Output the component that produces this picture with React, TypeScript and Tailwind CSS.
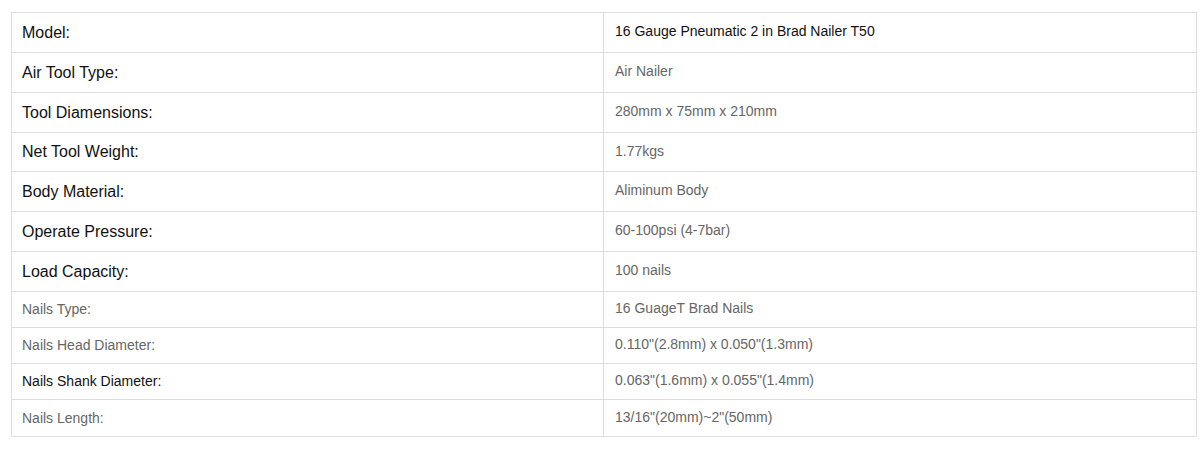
import React from "react";

type Row = { label: string; value: string; big: boolean; labelDark?: boolean; valueDark?: boolean; h: string; last?: boolean };

const rows: Row[] = [
  { label: "Model:", value: "16 Gauge Pneumatic 2 in Brad Nailer T50", big: true, valueDark: true, h: "h-[40px]" },
  { label: "Air Tool Type:", value: "Air Nailer", big: true, h: "h-[40px]" },
  { label: "Tool Diamensions:", value: "280mm x 75mm x 210mm", big: true, h: "h-[40px]" },
  { label: "Net Tool Weight:", value: "1.77kgs", big: true, h: "h-[39px]" },
  { label: "Body Material:", value: "Aliminum Body", big: true, h: "h-[40px]" },
  { label: "Operate Pressure:", value: "60-100psi (4-7bar)", big: true, h: "h-[40px]" },
  { label: "Load Capacity:", value: "100 nails", big: true, h: "h-[40px]" },
  { label: "Nails Type:", value: "16 GuageT Brad Nails", big: false, h: "h-[36px]" },
  { label: "Nails Head Diameter:", value: "0.110\"(2.8mm) x 0.050\"(1.3mm)", big: false, h: "h-[36px]" },
  { label: "Nails Shank Diameter:", value: "0.063\"(1.6mm) x 0.055\"(1.4mm)", big: false, labelDark: true, h: "h-[36px]" },
  { label: "Nails Length:", value: "13/16\"(20mm)~2\"(50mm)", big: false, h: "h-[36px]", last: true },
];

export default function App() {
  return (
    <div className="w-[1204px] h-[449px] bg-white pt-[12px] pl-[11px]" style={{ fontFamily: '"Liberation Sans", Arial, sans-serif' }}>
      <div className="w-[1186px] border border-[#dddddd] flex flex-col">
        {rows.map((r, i) => (
          <div key={i} className={`flex ${r.h} ${r.last ? "" : "border-b border-[#dddddd]"}`}>
            <div
              className={`w-[592px] border-r border-[#dddddd] pl-[10px] flex items-center ${
                r.big ? "text-[16px] text-[#111111]" : r.labelDark ? "text-[14px] text-[#111111]" : "text-[14px] text-[#666666]"
              }`}
            >
              {r.label}
            </div>
            <div className={`flex-1 pl-[11px] pb-[2px] flex items-center text-[14px] ${r.valueDark ? "text-[#111111]" : "text-[#666666]"}`}>
              {r.value}
            </div>
          </div>
        ))}
      </div>
    </div>
  );
}
